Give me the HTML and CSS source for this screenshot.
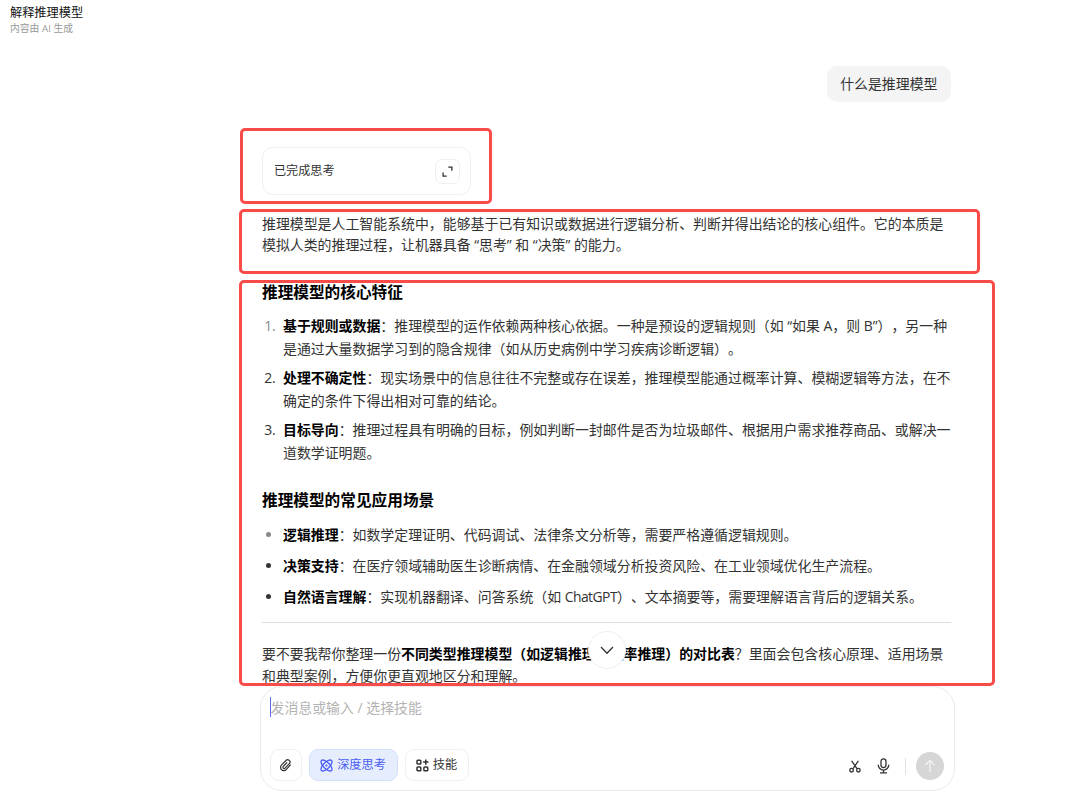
FILE: index.html
```
<!DOCTYPE html>
<html lang="zh-CN">
<head>
  <meta charset="UTF-8" />
  <meta name="viewport" content="width=device-width, initial-scale=1.0"/>
  <title>解释推理模型</title>
  <link rel="stylesheet" href="styles.css">
</head>
<body>
  <header class="topbar">
    <h1>解释推理模型</h1>
    <p>内容由 AI 生成</p>
  </header>

  <main class="chat">
    <div class="pregunta">什么是推理模型</div>

    <div class="thinking">
      <span>已完成思考</span>
      <button class="expand" type="button" aria-label="展开">
        <svg width="11" height="11" viewBox="0 0 11 11"><path d="M6.3 1.2h3.6v3.6M1.1 6.5v3.6h3.6"/></svg>
      </button>
    </div>

    <article class="answer">
      <p class="intro">推理模型是人工智能系统中，能够基于已有知识或数据进行逻辑分析、判断并得出结论的核心组件。它的本质是<br>模拟人类的推理过程，让机器具备 “思考” 和 “决策” 的能力。</p>

      <h2>推理模型的核心特征</h2>
      <ol>
        <li><b>基于规则或数据</b>：推理模型的运作依赖两种核心依据。一种是预设的逻辑规则（如 “如果 A，则 B”），另一种<br>是通过大量数据学习到的隐含规律（如从历史病例中学习疾病诊断逻辑）。</li>
        <li><b>处理不确定性</b>：现实场景中的信息往往不完整或存在误差，推理模型能通过概率计算、模糊逻辑等方法，在不<br>确定的条件下得出相对可靠的结论。</li>
        <li><b>目标导向</b>：推理过程具有明确的目标，例如判断一封邮件是否为垃圾邮件、根据用户需求推荐商品、或解决一<br>道数学证明题。</li>
      </ol>

      <h2 class="second">推理模型的常见应用场景</h2>
      <ul>
        <li><b>逻辑推理</b>：如数学定理证明、代码调试、法律条文分析等，需要严格遵循逻辑规则。</li>
        <li><b>决策支持</b>：在医疗领域辅助医生诊断病情、在金融领域分析投资风险、在工业领域优化生产流程。</li>
        <li><b>自然语言理解</b>：实现机器翻译、问答系统（如 <span class="latin">ChatGPT</span>）、文本摘要等，需要理解语言背后的逻辑关系。</li>
      </ul>

      <hr>
      <p class="closing">要不要我帮你整理一份<b>不同类型推理模型（如逻辑推理、概率推理）的对比表</b>？里面会包含核心原理、适用场景<br>和典型案例，方便你更直观地区分和理解。</p>
    </article>
  </main>

  <form class="composer">
    <div class="placeholder">发消息或输入 / 选择技能</div>
    <div class="tools">
      <button class="tool clip" type="button" aria-label="附件">
        <svg width="13" height="13" viewBox="0 0 14 14"><path d="M12.6 6.1 7.7 11.4a3.5 3.5 0 0 1-5.1-4.8l4.9-5a2.5 2.5 0 0 1 3.7 3.4L6.5 9.8a1.3 1.3 0 0 1-1.9-1.8l4.1-4.2"/></svg>
      </button>
      <button class="tool deep" type="button">
        <svg width="13" height="13" viewBox="0 0 13 13"><g transform="rotate(45 6.5 6.5)"><ellipse cx="6.5" cy="6.5" rx="7.1" ry="3.1"/><ellipse cx="6.5" cy="6.5" rx="3.1" ry="7.1"/></g><circle class="dot" cx="6.5" cy="6.5" r="1.1"/></svg>
        深度思考
      </button>
      <button class="tool skills" type="button">
        <svg width="13" height="13" viewBox="0 0 13 13"><rect x="1" y="1.2" width="3.8" height="3.8" rx=".8"/><rect x="1" y="8" width="3.8" height="3.8" rx=".8"/><rect x="7.9" y="8" width="3.8" height="3.8" rx=".8"/><path d="M9.8.4v5.4M7.1 3.1h5.4"/></svg>
        技能
      </button>
      <div class="actions">
        <svg width="12" height="13" viewBox="0 0 12 13"><path d="M2.6.8 8 8.7M9.4.8 4 8.7"/><circle cx="2.6" cy="10.2" r="1.8"/><circle cx="9.4" cy="10.2" r="1.8"/></svg>
        <svg class="mic" width="13" height="16" viewBox="0 0 13 16"><rect x="4" y=".8" width="5" height="8.8" rx="2.5"/><path d="M1.2 6.8a5.3 5.3 0 0 0 10.6 0M6.5 12v2.6M3 14.8h7"/></svg>
        <span class="divider"></span>
        <button class="send" type="button" aria-label="发送">
          <svg width="14" height="14" viewBox="0 0 14 14"><path d="M7 13V1.6M2.4 6 7 1.4 11.6 6"/></svg>
        </button>
      </div>
    </div>
  </form>

  <button class="scroll-down" type="button" aria-label="回到底部">
    <svg width="14" height="9" viewBox="0 0 14 9"><path d="M1 1l6 6.3L13 1"/></svg>
  </button>

  <div class="marca marca-thinking"></div>
  <div class="marca marca-intro"></div>
  <div class="marca marca-body"></div>
</body>
</html>
```
FILE: styles.css
```
* { box-sizing: border-box; margin: 0; padding: 0; }
body {
  position: relative;
  width: 1080px;
  height: 799px;
  overflow: hidden;
  background: #fff;
  color: #333;
  font-family: "Open Sans", "Noto Sans CJK SC", sans-serif;
  font-size: 13.92px;
  line-height: 22.5px;
  text-spacing-trim: space-all;
  white-space: nowrap;
}
button {
  font: inherit;
  color: inherit;
  background: #fff;
  border: 1px solid #efefef;
}
svg {
  display: block;
  flex: none;
  overflow: visible;
  fill: none;
  stroke: currentColor;
  stroke-width: 1.3;
}
.topbar {
  height: 66px;
  padding: 4px 0 0 10px;
}
.topbar h1 {
  font-size: 12.2px;
  font-weight: 400;
  line-height: 18px;
  color: #111;
}
.topbar p {
  font-size: 9.8px;
  line-height: 14px;
  color: #999;
}
.chat {
  width: 689px;
  height: 620px;
  margin-left: 262px;
  display: flex;
  flex-direction: column;
}
.pregunta {
  flex: none;
  align-self: flex-end;
  height: 36px;
  padding: 0 13.5px;
  line-height: 35px;
  background: #f4f4f4;
  border-radius: 10px;
}
.thinking {
  flex: none;
  display: flex;
  align-items: center;
  justify-content: space-between;
  width: 209px;
  height: 48px;
  margin-top: 45px;
  padding: 0 10px 0 11px;
  border: 1px solid #f0f0f0;
  border-radius: 11px;
  font-size: 12.1px;
}
.expand {
  display: flex;
  align-items: center;
  justify-content: center;
  width: 25px;
  height: 25px;
  border-radius: 7px;
}
.answer {
  margin-top: 18px;
}
.intro {
  line-height: 21px;
}
.answer h2 {
  margin-top: 25px;
  font-size: 15.67px;
  line-height: 24px;
  color: #000;
}
.answer h2.second {
  margin-top: 24px;
}
.answer b {
  color: #000;
}
ol, ul {
  margin-top: 11px;
  padding-left: 21px;
}
ol li {
  margin-bottom: 7px;
}
ol li::marker {
  content: counter(list-item) ".\00a0\00a0";
}
li:first-child::marker {
  color: #888;
}
ul {
  margin-top: 12px;
}
ul li {
  margin-bottom: 8.7px;
}
.latin {
  letter-spacing: -0.55px;
}
hr {
  margin-top: 13px;
  border: 0;
  border-top: 1px solid #dedede;
}
.closing {
  margin-top: 20px;
}
.composer {
  display: flex;
  flex-direction: column;
  justify-content: space-between;
  width: 695px;
  height: 105px;
  margin-left: 259.5px;
  padding: 10px 10px 9px;
  background: #fff;
  border: 1px solid #eaeaea;
  border-radius: 22px;
}
.placeholder {
  height: 20px;
  margin-left: -1px;
  line-height: 21px;
  border-left: 1px solid #5b6cf0;
  color: #b3b3b3;
}
.tools {
  display: flex;
  align-items: center;
  gap: 7px;
  margin-left: -1px;
}
.tool {
  display: flex;
  align-items: center;
  justify-content: center;
  gap: 4px;
  height: 32px;
  border-radius: 9px;
  font-size: 12.2px;
}
.clip {
  width: 32px;
}
.deep {
  width: 89px;
  background: #e6eefe;
  border-color: #d3dffd;
  color: #4a5df5;
}
.deep .dot {
  fill: currentColor;
  stroke: none;
}
.skills {
  width: 64px;
}
.skills svg {
  stroke-width: 1.5;
}
.actions {
  display: flex;
  align-items: center;
  margin: 2px 0 0 auto;
}
.mic {
  margin-left: 16px;
}
.divider {
  width: 1px;
  height: 17px;
  margin: 0 10px 0 15px;
  background: #e2e2e2;
}
.send {
  display: flex;
  align-items: center;
  justify-content: center;
  width: 28px;
  height: 28px;
  background: #d6d6d6;
  border: 0;
  border-radius: 50%;
  color: #f2f2f2;
}
.scroll-down {
  position: absolute;
  left: 588px;
  top: 631px;
  display: flex;
  align-items: center;
  justify-content: center;
  width: 38px;
  height: 38px;
  border-radius: 50%;
}
/* marcos rojos sobre cada parte de la respuesta */
.marca {
  position: absolute;
  border: 3px solid #f94b48;
  border-radius: 5px;
  pointer-events: none;
}
.marca-thinking {
  left: 240px;
  top: 128px;
  width: 252px;
  height: 76px;
}
.marca-intro {
  left: 239px;
  top: 209px;
  width: 741px;
  height: 65px;
}
.marca-body {
  left: 239px;
  top: 280px;
  width: 756px;
  height: 406px;
}
```
